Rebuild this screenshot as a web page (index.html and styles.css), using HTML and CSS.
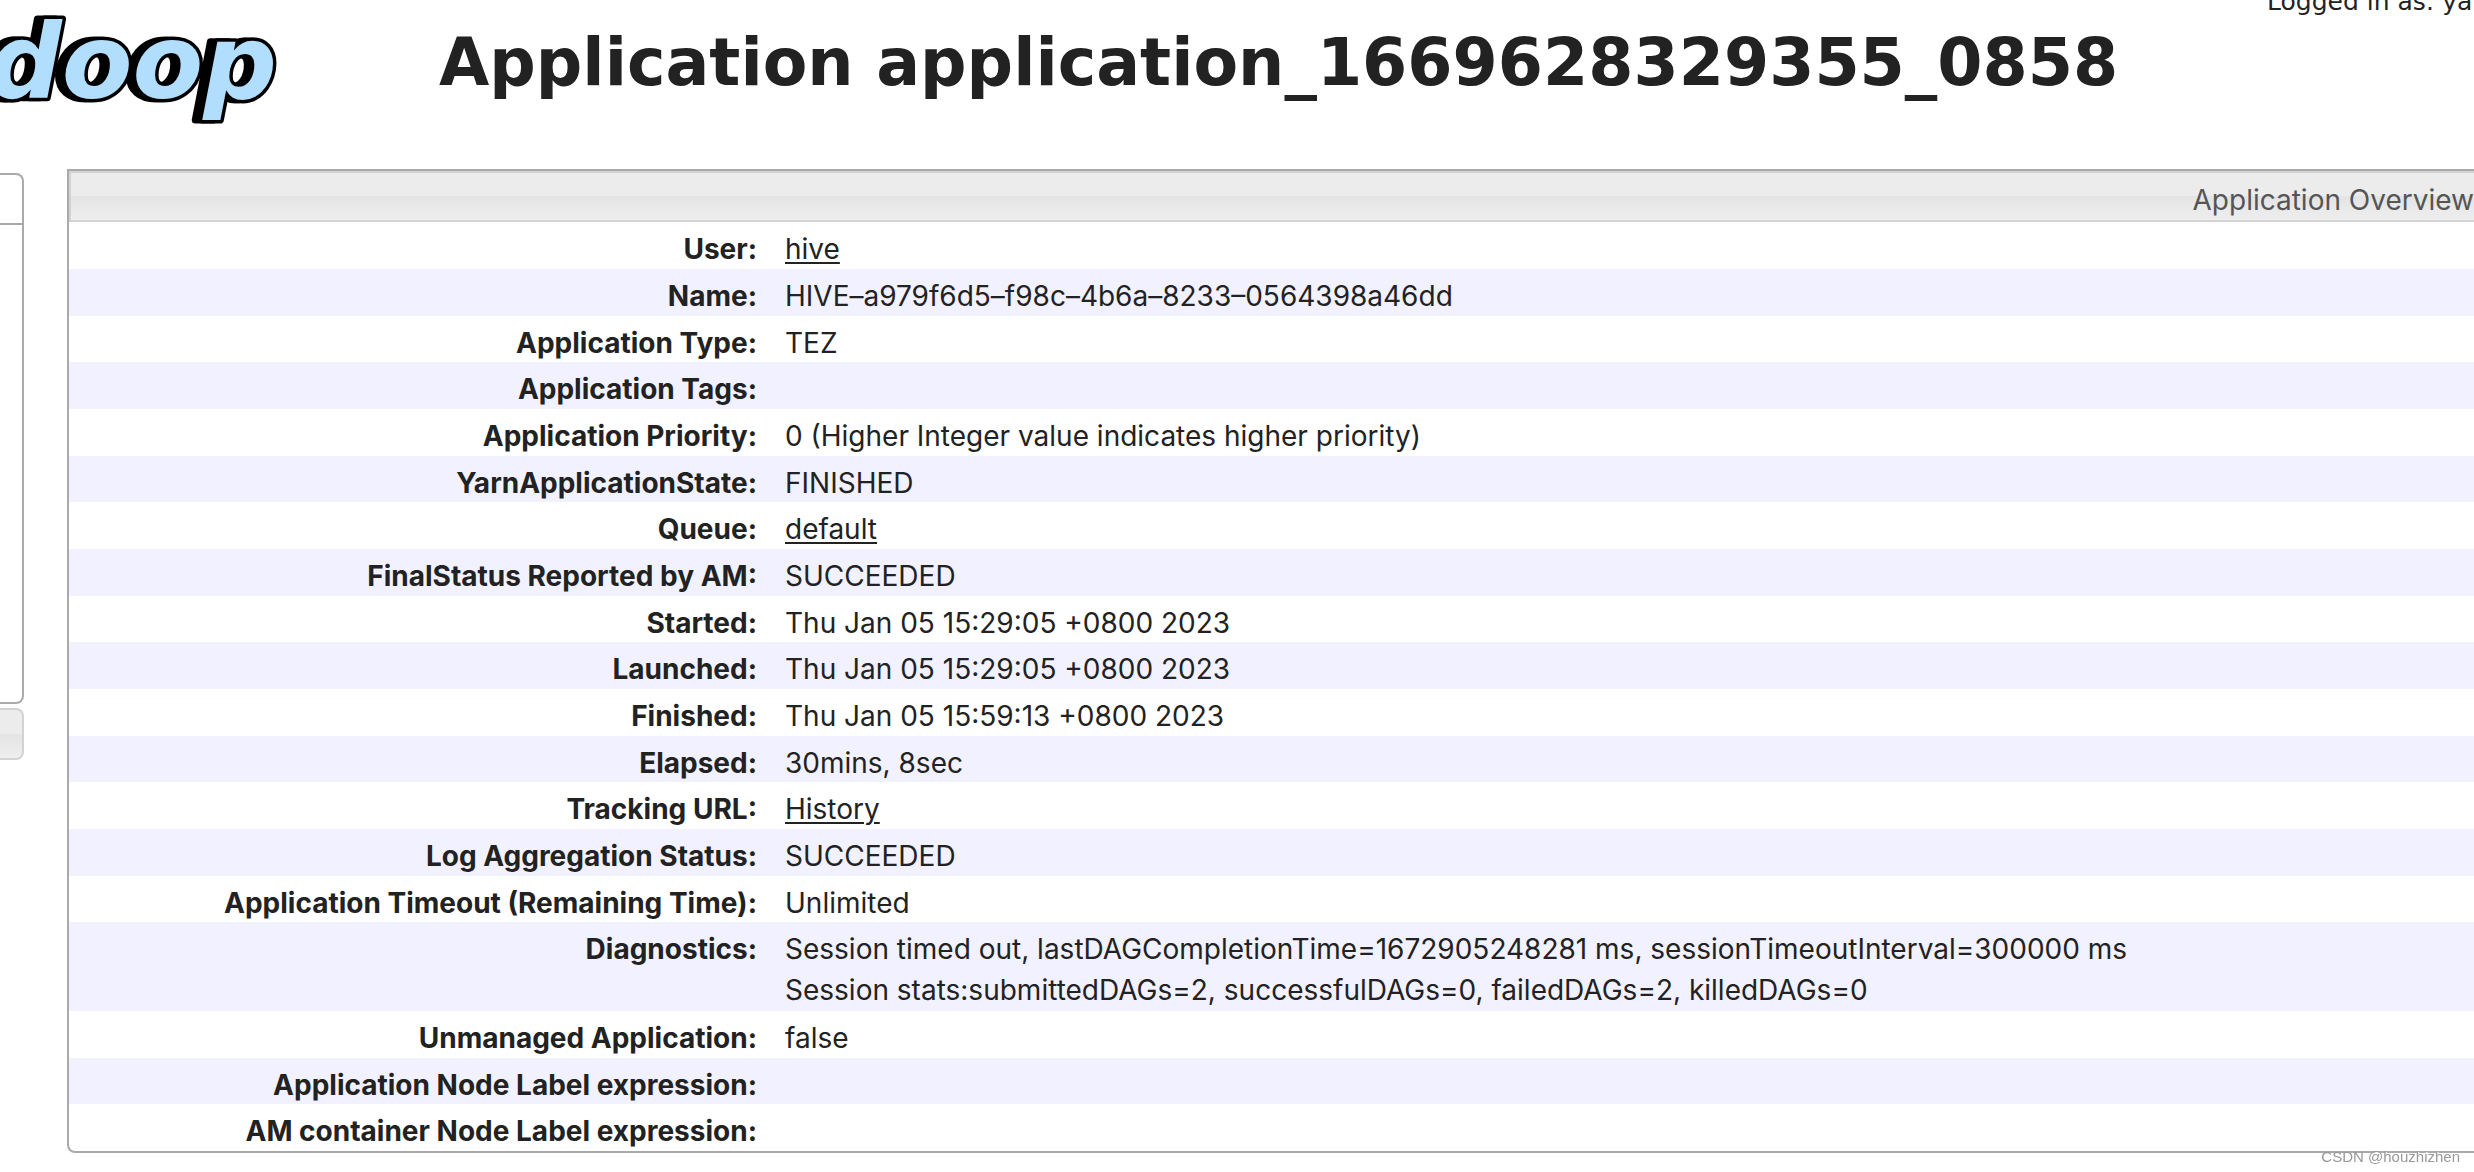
FILE: index.html
```html
<!DOCTYPE html>
<html lang="en">
<head>
<meta charset="utf-8">
<title>Application application_1669628329355_0858</title>
<link rel="stylesheet" href="styles.css">
</head>
<body>
<header class="header">
  <svg class="logo" viewBox="0 0 284 140" role="img" aria-label="doop">
    <text class="logo-text" x="-12" y="98">doop</text>
  </svg>
  <h1 class="title">Application application_1669628329355_0858</h1>
  <div class="user">Logged in as: yarn</div>
</header>
<div class="layout">
  <nav class="nav" aria-label="Cluster">
    <div class="nav-open"><div class="nav-head"></div></div>
    <div class="nav-closed"></div>
  </nav>
  <main class="content">
    <table class="info">
      <caption class="info-head">Application Overview</caption>
      <tbody>
        <tr><th scope="row">User:</th><td><a href="#user">hive</a></td></tr>
        <tr><th scope="row">Name:</th><td>HIVE–a979f6d5–f98c–4b6a–8233–0564398a46dd</td></tr>
        <tr><th scope="row">Application Type:</th><td>TEZ</td></tr>
        <tr><th scope="row">Application Tags:</th><td></td></tr>
        <tr><th scope="row">Application Priority:</th><td>0 (Higher Integer value indicates higher priority)</td></tr>
        <tr><th scope="row">YarnApplicationState:</th><td>FINISHED</td></tr>
        <tr><th scope="row">Queue:</th><td><a href="#queue">default</a></td></tr>
        <tr><th scope="row">FinalStatus Reported by AM:</th><td>SUCCEEDED</td></tr>
        <tr><th scope="row">Started:</th><td>Thu Jan 05 15:29:05 +0800 2023</td></tr>
        <tr><th scope="row">Launched:</th><td>Thu Jan 05 15:29:05 +0800 2023</td></tr>
        <tr><th scope="row">Finished:</th><td>Thu Jan 05 15:59:13 +0800 2023</td></tr>
        <tr><th scope="row">Elapsed:</th><td>30mins, 8sec</td></tr>
        <tr><th scope="row">Tracking URL:</th><td><a href="#history">History</a></td></tr>
        <tr><th scope="row">Log Aggregation Status:</th><td>SUCCEEDED</td></tr>
        <tr><th scope="row">Application Timeout (Remaining Time):</th><td>Unlimited</td></tr>
        <tr><th scope="row">Diagnostics:</th><td class="multiline">Session timed out, lastDAGCompletionTime=1672905248281 ms, sessionTimeoutInterval=300000 ms<br>Session stats:submittedDAGs=2, successfulDAGs=0, failedDAGs=2, killedDAGs=0</td></tr>
        <tr><th scope="row">Unmanaged Application:</th><td>false</td></tr>
        <tr><th scope="row">Application Node Label expression:</th><td></td></tr>
        <tr><th scope="row">AM container Node Label expression:</th><td></td></tr>
      </tbody>
    </table>
  </main>
</div>
<div class="watermark">CSDN @houzhizhen</div>
</body>
</html>
```
FILE: styles.css
```css
* {
  box-sizing: border-box;
}

body {
  margin: 0;
  overflow: hidden;
  background: #fff;
  color: #222;
  font-family: Inter, "Liberation Sans", sans-serif;
  font-size: 28px;
  line-height: 38px;
}

a {
  color: inherit;
  text-decoration-thickness: 2px;
  text-underline-offset: 3px;
}

.header {
  position: relative;
  display: flex;
  align-items: flex-start;
  height: 169px;
  font-family: "DejaVu Sans", sans-serif;
}

.logo {
  flex: none;
  width: 284px;
  height: 140px;
}

.logo-text {
  font-family: "DejaVu Sans", sans-serif;
  font-size: 103px;
  font-weight: bold;
  font-style: oblique;
  fill: #b0defc;
  stroke: #000;
  stroke-width: 7px;
  stroke-linejoin: round;
  paint-order: stroke;
  filter: drop-shadow(-7px 0 0 #000);
}

.title {
  margin: 25px 0 0 155px;
  font-size: 65px;
  line-height: 76px;
  white-space: nowrap;
}

.user {
  position: absolute;
  top: -16px;
  right: -24px;
  font-size: 25px;
  line-height: 36px;
  white-space: nowrap;
}

.layout {
  display: flex;
  align-items: flex-start;
}

.nav {
  flex: none;
  display: flex;
  flex-direction: column;
  gap: 4px;
  width: 24px;
  margin: 4px 43px 0 0;
}

.nav-open {
  height: 531px;
  border: 2px solid #aaa;
  border-left: 0;
  border-radius: 0 8px 8px 0;
}

.nav-head {
  height: 50px;
  border-bottom: 2px solid #aaa;
}

.nav-closed {
  height: 52px;
  border: 2px solid #d3d3d3;
  border-left: 0;
  border-radius: 0 8px 8px 0;
  background: linear-gradient(#ececec 50%, #e4e4e4 50%, #eee);
}

.content {
  flex: 1;
  border: 2px solid #aaa;
  border-right: 0;
  border-radius: 0 0 0 8px;
  overflow: hidden;
}

.info {
  width: 100%;
  border-spacing: 0;
}

.info-head {
  height: 51px;
  padding-top: 8px;
  border: 2px solid #d3d3d3;
  border-right: 0;
  background: linear-gradient(#ececec 50%, #e4e4e4 50%, #eee);
  color: #555;
  text-align: right;
}

.info tr {
  height: 47px;
}

.info tr:nth-child(3n) {
  height: 46px;
}

.info tr:nth-child(even) {
  background: #f1f1ff;
}

.info th,
.info td {
  padding: 8px 14px 0;
  text-align: left;
  vertical-align: top;
}

.info th {
  width: 702px;
  font-weight: 700;
  text-align: right;
}

.info .multiline {
  padding-top: 7px;
  line-height: 41px;
}

.watermark {
  position: fixed;
  right: 14px;
  bottom: 3px;
  color: #999;
  font-family: "Liberation Sans", sans-serif;
  font-size: 15px;
  line-height: 24px;
  text-shadow: 1px 1px 0 #fff;
}
```
